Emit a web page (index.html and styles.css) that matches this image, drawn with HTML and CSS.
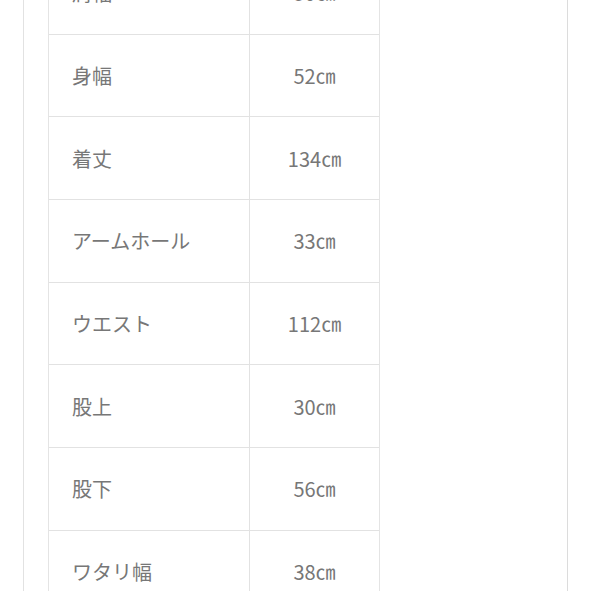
FILE: index.html
```html
<!DOCTYPE html>
<html lang="ja">
<head>
<meta charset="utf-8">
<link rel="stylesheet" href="styles.css">
</head>
<body>
<div class="frame">
  <div class="sheet">
    <div class="size-table">
      <div class="row"><div class="label">肩幅</div><div class="value">50㎝</div></div>
      <div class="row"><div class="label">身幅</div><div class="value">52㎝</div></div>
      <div class="row"><div class="label">着丈</div><div class="value">134㎝</div></div>
      <div class="row"><div class="label">アームホール</div><div class="value">33㎝</div></div>
      <div class="row"><div class="label">ウエスト</div><div class="value">112㎝</div></div>
      <div class="row"><div class="label">股上</div><div class="value">30㎝</div></div>
      <div class="row"><div class="label">股下</div><div class="value">56㎝</div></div>
      <div class="row"><div class="label">ワタリ幅</div><div class="value">38㎝</div></div>
    </div>
  </div>
</div>
</body>
</html>
```

FILE: styles.css
```css
html, body {
  margin: 0;
  padding: 0;
  background: #ffffff;
  overflow: hidden;
}
body {
  width: 591px;
  height: 591px;
  font-family: "Noto Sans CJK JP", "Noto Sans", sans-serif;
  color: #777777;
}
.frame {
  padding-left: 23px;
  width: 545px;
}
.sheet {
  border-left: 1px solid #e2e2e2;
  border-right: 1px solid #dcdcdc;
  padding-left: 24px;
  height: 700px;
  margin-top: -48px;
}
.size-table {
  width: 332px;
  box-sizing: border-box;
  border-left: 1px solid #e4e4e4;
  border-right: 1px solid #e4e4e4;
}
.row {
  display: grid;
  grid-template-columns: 201px 1fr;
  height: 82.67px;
  box-sizing: border-box;
  border-bottom: 1px solid #e2e2e2;
}
.label {
  display: flex;
  align-items: center;
  padding-left: 23px;
  font-size: 20px;
  border-right: 1px solid #e2e2e2;
}
.value {
  display: flex;
  align-items: center;
  justify-content: center;
  font-size: 20px;
  letter-spacing: 0;
}
```
